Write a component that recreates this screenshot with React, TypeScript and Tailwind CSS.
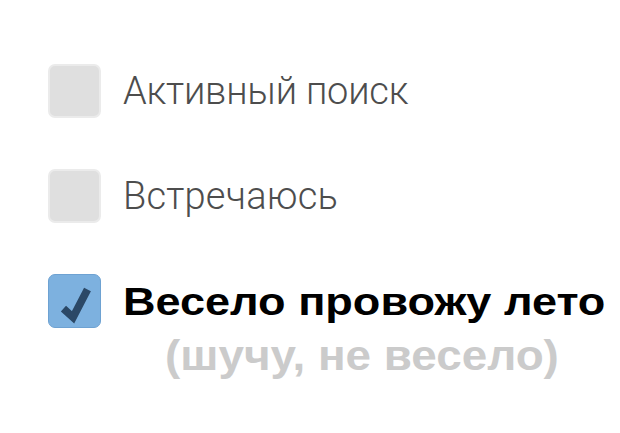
import { ReactNode } from "react";

// Single option row: square checkbox followed by its label
function Option({ checked, children }: { checked?: boolean; children: ReactNode }) {
  return (
    <div className="flex items-center gap-[22px]">
      {checked ? (
        <div className="w-[53px] h-[54px] shrink-0 rounded-[7px] bg-[#7db1df] border border-[#6ea2d2] flex items-center justify-center">
          <svg width="53" height="54" viewBox="0 0 53 54">
            <polyline
              points="15,35 25,44 40,15"
              fill="none"
              stroke="#2b4866"
              strokeWidth="8"
              strokeLinecap="butt"
              strokeLinejoin="miter"
            />
          </svg>
        </div>
      ) : (
        <div className="w-[53px] h-[54px] shrink-0 rounded-[7px] bg-[#dfdfdf] border-2 border-[#ebebeb]" />
      )}
      {children}
    </div>
  );
}

export default function App() {
  return (
    <div className="w-[620px] h-[433px] bg-white pl-[48px] pt-[64px] overflow-hidden">
      <div className="flex flex-col gap-[51px]">
        <Option>
          <span className="font-['Roboto',sans-serif] font-light text-[38px] leading-none text-[#4d4d4d] tracking-[-0.2px]">
            Активный поиск
          </span>
        </Option>
        <Option>
          <span className="font-['Roboto',sans-serif] font-light text-[38px] leading-none text-[#4d4d4d] tracking-[0.2px]">
            Встречаюсь
          </span>
        </Option>
        <Option checked>
          <span className="inline-block whitespace-nowrap origin-left scale-x-[1.155] font-['Liberation_Sans',Arial,sans-serif] font-bold text-[39px] leading-none text-black">
            Весело провожу лето
          </span>
        </Option>
      </div>
      <div className="ml-[117px] mt-[6px] inline-block whitespace-nowrap origin-left scale-x-[1.065] font-['Liberation_Sans',Arial,sans-serif] font-bold text-[43px] leading-none text-[#cbcbcb]">
        (шучу, не весело)
      </div>
    </div>
  );
}
